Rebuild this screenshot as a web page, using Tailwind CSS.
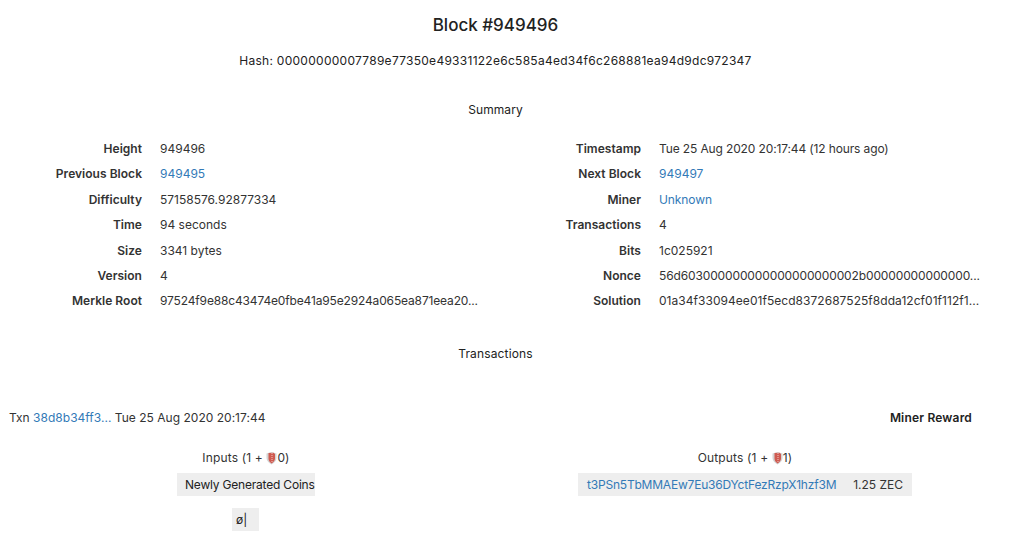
<!doctype html>
<html><head><meta charset="utf-8"><script src="https://cdn.jsdelivr.net/npm/@tailwindcss/browser@4"></script></head>
<body class="bg-white overflow-hidden font-['Inter',sans-serif] text-[12px] leading-[18px] text-[#333]">
<div class="h-[542px] w-[1024px] overflow-hidden">
<h1 class="w-[991px] pt-[14px] text-center text-[17px] leading-[22px] font-medium text-[#222]">Block #949496</h1>
<p class="w-[991px] mt-[16px] text-center text-[#222] tracking-[0.27px]">Hash: 00000000007789e77350e49331122e6c585a4ed34f6c268881ea94d9dc972347</p>
<h2 class="w-[991px] mt-[31px] text-center text-[#222] tracking-[0.1px]">Summary</h2>
<div class="mt-[21px] flex">
  <dl class="w-[499px] grid grid-cols-[142px_1fr] gap-x-[18px] gap-y-[7.4px]">
    <dt class="text-right font-semibold tracking-[0.03px]">Height</dt><dd>949496</dd>
    <dt class="text-right font-semibold tracking-[0.03px]">Previous Block</dt><dd class="text-[#337ab7]">949495</dd>
    <dt class="text-right font-semibold tracking-[0.03px]">Difficulty</dt><dd>57158576.92877334</dd>
    <dt class="text-right font-semibold tracking-[0.03px]">Time</dt><dd>94 seconds</dd>
    <dt class="text-right font-semibold tracking-[0.03px]">Size</dt><dd>3341 bytes</dd>
    <dt class="text-right font-semibold tracking-[0.03px]">Version</dt><dd>4</dd>
    <dt class="text-right font-semibold tracking-[0.03px]">Merkle Root</dt><dd class="tracking-[-0.15px]">97524f9e88c43474e0fbe41a95e2924a065ea871eea20...</dd>
  </dl>
  <dl class="w-[499px] grid grid-cols-[142px_1fr] gap-x-[18px] gap-y-[7.4px]">
    <dt class="text-right font-semibold tracking-[0.03px]">Timestamp</dt><dd class="tracking-[-0.13px]">Tue 25 Aug 2020 20:17:44 (12 hours ago)</dd>
    <dt class="text-right font-semibold tracking-[0.03px]">Next Block</dt><dd class="text-[#337ab7]">949497</dd>
    <dt class="text-right font-semibold tracking-[0.03px]">Miner</dt><dd class="text-[#337ab7] tracking-[-0.1px]">Unknown</dd>
    <dt class="text-right font-semibold tracking-[0.03px]">Transactions</dt><dd>4</dd>
    <dt class="text-right font-semibold tracking-[0.03px]">Bits</dt><dd>1c025921</dd>
    <dt class="text-right font-semibold tracking-[0.03px]">Nonce</dt><dd class="tracking-[-0.13px]">56d603000000000000000000002b00000000000000...</dd>
    <dt class="text-right font-semibold tracking-[0.03px]">Solution</dt><dd class="tracking-[0.04px]">01a34f33094ee01f5ecd8372687525f8dda12cf01f112f1...</dd>
  </dl>
</div>
<h2 class="w-[991px] mt-[35px] text-center text-[#222] tracking-[0.15px]">Transactions</h2>
<div class="mt-[46px] flex justify-between pl-[9px] pr-[52px]">
  <p class="tracking-[0.02px]">Txn <span class="text-[#337ab7]">38d8b34ff3...</span> Tue 25 Aug 2020 20:17:44</p>
  <p class="font-semibold text-[#222] tracking-[0.18px]">Miner Reward</p>
</div>
<div class="mt-[22px] flex">
  <div class="w-[495px] flex flex-col items-end pr-[180px]">
    <div class="w-[138px] text-center flex justify-center items-center tracking-[0.15px]">Inputs (1 +&nbsp;<svg width="11" height="14" viewBox="0 0 11 14"><path d="M5.500 1 10.500 2.500V7c0 3-2.500 5-5 6.500C3 12 .5 10 .5 7V2.500Z" fill="#d4d4d4"/><path d="M2.500 2 7.500 1.800 9 3V7.500c0 2-1.500 3.600-3.500 5C3.500 11 2.500 9.500 2.500 7.500Z" fill="#cf5a50"/><path d="M6 2V12" stroke="#f0c8c4" stroke-dasharray="1 1"/></svg>0)</div>
    <div class="mt-[6px] w-[138px] h-[23px] bg-[#eee] flex items-center pl-[8px] whitespace-nowrap text-[#222] tracking-[-0.2px]">Newly Generated Coins</div>
    <div class="mt-[12px] mr-[56px] w-[27px] h-[23px] bg-[#eee] flex items-center pl-[4px] text-[#222]">ø|</div>
  </div>
  <div class="flex flex-col items-center w-[334px] ml-[83px]">
    <div class="flex items-center tracking-[0.15px]">Outputs (1 +&nbsp;<svg width="11" height="14" viewBox="0 0 11 14"><path d="M5.500 1 10.500 2.500V7c0 3-2.500 5-5 6.500C3 12 .5 10 .5 7V2.500Z" fill="#d4d4d4"/><path d="M2.500 2 7.500 1.800 9 3V7.500c0 2-1.500 3.600-3.500 5C3.500 11 2.500 9.500 2.500 7.500Z" fill="#cf5a50"/><path d="M6 2V12" stroke="#f0c8c4" stroke-dasharray="1 1"/></svg>1)</div>
    <div class="mt-[6px] w-[334px] h-[23px] bg-[#eee] flex items-center justify-between pl-[9px] pr-[9px] whitespace-nowrap"><span class="text-[#337ab7] tracking-[-0.2px]">t3PSn5TbMMAEw7Eu36DYctFezRzpX1hzf3M</span><span>1.25 ZEC</span></div>
  </div>
</div>
</div>
</body></html>
